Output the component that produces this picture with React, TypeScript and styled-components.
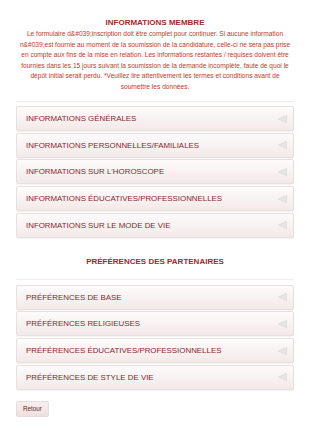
import styled, { createGlobalStyle } from "styled-components";

const GlobalStyle = createGlobalStyle`
  html, body {
    margin: 0;
    padding: 0;
    background: #ffffff;
  }
  body {
    font-family: "Liberation Sans", Arial, sans-serif;
  }
`;

const Page = styled.div`
  width: 310px;
  padding: 17px 16px 10px;
  box-sizing: border-box;
  display: flex;
  flex-direction: column;
`;

const SectionTitle = styled.h2<{ $top?: number }>`
  margin: ${(p) => p.$top ?? 0}px 0 0;
  font-size: 8px;
  font-weight: bold;
  color: #a3282a;
  text-align: center;
  line-height: 12px;
`;

const Notice = styled.p`
  margin: 0;
  font-size: 6.6px;
  line-height: 10.5px;
  color: #c0392b;
  text-align: center;
`;

const Divider = styled.hr<{ $top: number; $bottom: number }>`
  border: 0;
  border-top: 1px solid #f0eded;
  margin: ${(p) => p.$top}px 0 ${(p) => p.$bottom}px;
`;

const PanelList = styled.div`
  display: flex;
  flex-direction: column;
  gap: 1.7px;
`;

const Panel = styled.div`
  height: 25px;
  box-sizing: border-box;
  display: flex;
  align-items: center;
  justify-content: space-between;
  padding: 0 6px 0 9px;
  border: 1px solid #e6e0e0;
  border-radius: 2px;
  background: linear-gradient(to bottom, #fdfbfb 0%, #f4e9e9 100%);
  box-shadow: 0 1px 1px rgba(0, 0, 0, 0.05);
`;

const PanelLabel = styled.span`
  font-size: 7.9px;
  color: #8b1e2c;
`;

const Arrow = () => (
  <svg width="9" height="8" viewBox="0 0 9 8">
    <polygon points="8.5,0.5 8.5,7.5 0.5,4" fill="#e8e6e6" stroke="#d6d4d4" strokeWidth="0.6" />
  </svg>
);

const BackButton = styled.button`
  align-self: flex-start;
  margin-top: 11px;
  width: 33px;
  height: 16px;
  padding: 0;
  font-family: "Liberation Sans", Arial, sans-serif;
  font-size: 6.3px;
  color: #6b1f25;
  border: 1px solid #e6dcdc;
  border-radius: 2px;
  background: linear-gradient(to bottom, #f8eeee 0%, #efe0e0 100%);
`;

const memberSections = [
  "INFORMATIONS GÉNÉRALES",
  "INFORMATIONS PERSONNELLES/FAMILIALES",
  "INFORMATIONS SUR L'HOROSCOPE",
  "INFORMATIONS ÉDUCATIVES/PROFESSIONNELLES",
  "INFORMATIONS SUR LE MODE DE VIE",
];

const partnerSections = [
  "PRÉFÉRENCES DE BASE",
  "PRÉFÉRENCES RELIGIEUSES",
  "PRÉFÉRENCES ÉDUCATIVES/PROFESSIONNELLES",
  "PRÉFÉRENCES DE STYLE DE VIE",
];

function Panels({ items }: { items: string[] }) {
  return (
    <PanelList>
      {items.map((label) => (
        <Panel key={label}>
          <PanelLabel>{label}</PanelLabel>
          <Arrow />
        </Panel>
      ))}
    </PanelList>
  );
}

export default function App() {
  return (
    <>
      <GlobalStyle />
      <Page>
        <SectionTitle>INFORMATIONS MEMBRE</SectionTitle>
        <Notice>
          Le formulaire d&amp;#039;inscription doit être complet pour continuer. Si aucune information
          n&amp;#039;est fournie au moment de la soumission de la candidature, celle-ci ne sera pas prise
          en compte aux fins de la mise en relation. Les informations restantes / requises doivent être
          fournies dans les 15 jours suivant la soumission de la demande incomplète, faute de quoi le
          dépôt initial serait perdu. *Veuillez lire attentivement les termes et conditions avant de
          soumettre les données.
        </Notice>
        <Divider $top={9} $bottom={4} />
        <Panels items={memberSections} />
        <SectionTitle $top={18}>PRÉFÉRENCES DES PARTENAIRES</SectionTitle>
        <Divider $top={11} $bottom={5} />
        <Panels items={partnerSections} />
        <BackButton>Retour</BackButton>
      </Page>
    </>
  );
}
